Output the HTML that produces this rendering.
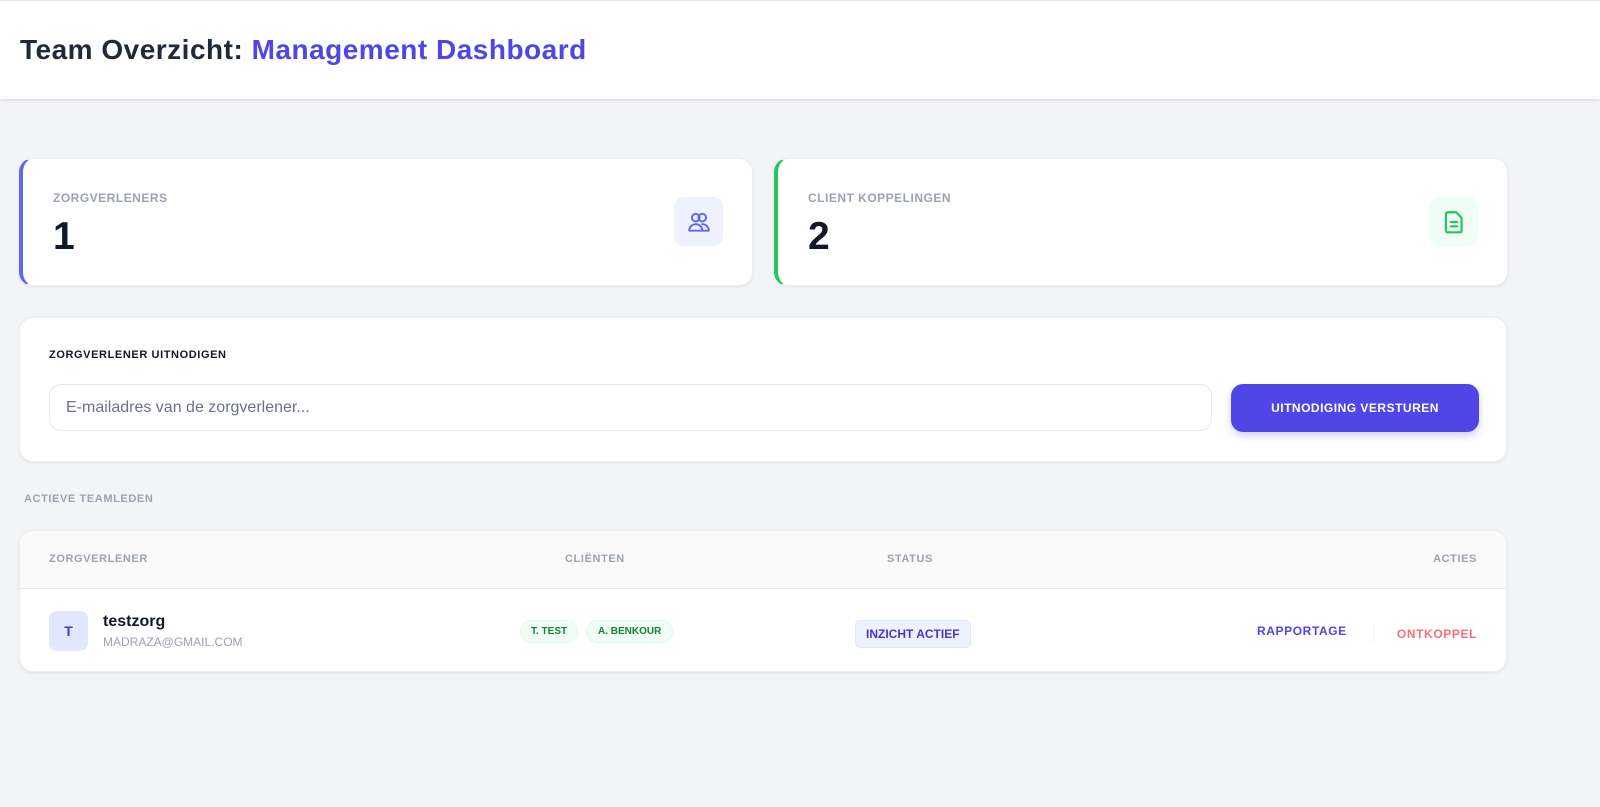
<!DOCTYPE html>
<html><head><meta charset="utf-8"><style>
*{box-sizing:border-box;margin:0;padding:0}
body{width:1600px;height:807px;background:#f3f4f6;font-family:"Liberation Sans",sans-serif;position:relative;overflow:hidden}
.hdr{position:absolute;left:0;top:0;width:1600px;height:99px;background:#fff;border-top:1px solid #e5e7eb;box-shadow:0 1px 3px rgba(0,0,0,.12)}
.hdr h1{position:absolute;left:20px;top:33px;font-size:28px;font-weight:900;color:#1f2937;letter-spacing:0.5px}
.hdr h1 span{color:#4f46e5}
.card{position:absolute;background:#fff;border-radius:14px;box-shadow:0 1px 3px rgba(0,0,0,.08);border:1px solid #eceef1}
.stat{top:158px;height:128px;width:734px}
.lbl{position:absolute;left:30px;top:32px;font-size:12px;font-weight:700;color:#9ca3af;letter-spacing:.5px}
.num{position:absolute;left:30px;top:56px;font-size:39px;font-weight:900;color:#111827}
.ico{position:absolute;right:29px;top:38px;width:49px;height:49px;border-radius:10px;display:flex;align-items:center;justify-content:center}
.small{font-size:11px;font-weight:700;letter-spacing:.6px}
</style></head><body>
<div class="hdr"><h1>Team Overzicht: <span>Management Dashboard</span></h1></div>

<div class="card stat" style="left:19px;border-left:4px solid #6366f1">
<div class="lbl">ZORGVERLENERS</div><div class="num">1</div>
<div class="ico" style="background:#eef2ff"><svg width="26" height="26" viewBox="0 0 24 24" fill="none" stroke="#6366f1" stroke-width="1.8" stroke-linecap="round" stroke-linejoin="round"><circle cx="9" cy="8" r="3.5"/><circle cx="15" cy="8" r="3.5"/><path d="M3 20c0-3.5 2.7-6 6-6s6 2.5 6 6z"/><path d="M15 14c3.3 0 6 2.5 6 6h-6"/></svg></div>
</div>
<div class="card stat" style="left:774px;border-left:4px solid #22c55e">
<div class="lbl">CLIENT KOPPELINGEN</div><div class="num">2</div>
<div class="ico" style="background:#f0fdf4"><svg width="26" height="26" viewBox="0 0 24 24" fill="none" stroke="#22c55e" stroke-width="2" stroke-linecap="round" stroke-linejoin="round"><path d="M6 3h8l5 5v12a1.5 1.5 0 0 1-1.5 1.5h-11.5a1.5 1.5 0 0 1-1.5-1.5v-15.5a1.5 1.5 0 0 1 1.5-1.5z"/><path d="M9 12h6M9 16h6"/></svg></div>
</div>

<div class="card" style="left:19px;top:317px;width:1488px;height:145px">
<div class="small" style="position:absolute;left:29px;top:31px;color:#111827">ZORGVERLENER UITNODIGEN</div>
<div style="position:absolute;left:29px;top:66px;width:1163px;height:47px;border:1px solid #e5e7eb;border-radius:12px;font-size:16px;color:#6b7280;padding:14px 0 0 16px">E-mailadres van de zorgverlener...</div>
<div style="position:absolute;left:1211px;top:66px;width:248px;height:48px;background:#4f46e5;border-radius:12px;color:#fff;font-size:12px;font-weight:700;letter-spacing:.5px;display:flex;align-items:center;justify-content:center;box-shadow:0 4px 8px rgba(79,70,229,.25)">UITNODIGING VERSTUREN</div>
</div>

<div class="small" style="position:absolute;left:24px;top:493px;color:#9ca3af">ACTIEVE TEAMLEDEN</div>

<div class="card" style="left:19px;top:530px;width:1488px;height:142px;overflow:hidden">
<div style="position:absolute;left:0;top:0;width:100%;height:58px;background:#fafafa;border-bottom:1px solid #e5e7eb"></div>
<div class="small" style="position:absolute;left:29px;top:22px;color:#9ca3af">ZORGVERLENER</div>
<div class="small" style="position:absolute;left:545px;top:22px;color:#9ca3af">CLIËNTEN</div>
<div class="small" style="position:absolute;left:867px;top:22px;color:#9ca3af">STATUS</div>
<div class="small" style="position:absolute;right:29px;top:22px;color:#9ca3af">ACTIES</div>
<div style="position:absolute;left:29px;top:80px;width:39px;height:40px;background:#e0e7ff;border-radius:8px;color:#4338ca;font-size:14px;font-weight:700;display:flex;align-items:center;justify-content:center">T</div>
<div style="position:absolute;left:83px;top:82px;font-size:16px;font-weight:700;color:#111827">testzorg</div>
<div style="position:absolute;left:83px;top:104px;font-size:12px;color:#9ca3af">MADRAZA@GMAIL.COM</div>
<div style="position:absolute;left:500px;top:89px;height:23px;padding:0 10px;background:#f0fdf4;border:1px solid #dcfce7;border-radius:12px;font-size:10px;font-weight:700;color:#15803d;line-height:21px">T. TEST</div>
<div style="position:absolute;left:566px;top:89px;height:23px;padding:0 11px;background:#f0fdf4;border:1px solid #dcfce7;border-radius:12px;font-size:10px;font-weight:700;color:#15803d;line-height:21px">A. BENKOUR</div>
<div style="position:absolute;left:835px;top:89px;height:28px;padding:0 10px;background:#eef2ff;border:1px solid #e0e7ff;border-radius:5px;font-size:12px;font-weight:700;color:#4338ca;line-height:26px">INZICHT ACTIEF</div>
<div class="small" style="position:absolute;left:1237px;top:93px;color:#4f46e5;font-size:12px">RAPPORTAGE</div>
<div style="position:absolute;left:1353px;top:94px;width:1px;height:18px;background:#f3f4f6"></div>
<div class="small" style="position:absolute;right:29px;top:96px;color:#f87171;font-size:12px">ONTKOPPEL</div>
</div>
</body></html>
